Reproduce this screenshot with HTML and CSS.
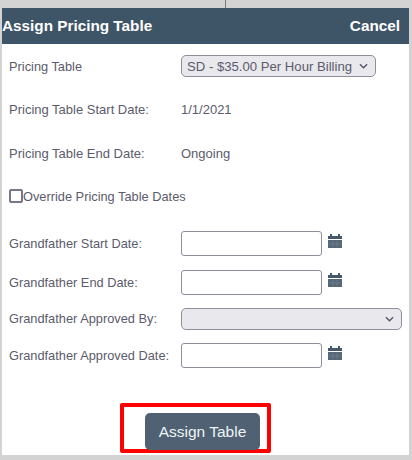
FILE: index.html
```html
<!DOCTYPE html>
<html lang="en">
<head>
<meta charset="utf-8">
<title>Assign Pricing Table</title>
<link rel="stylesheet" href="styles.css">
</head>
<body>
<div class="backdrop-line"></div>
<div class="dialog">
  <header class="head"><span>Assign Pricing Table</span><span>Cancel</span></header>
  <div class="form">
    <div class="row row-a"><span class="label">Pricing Table</span>
      <span class="select sel-short"><span class="sel-text">SD - $35.00 Per Hour Billing</span><svg class="chev" width="9" height="6" viewBox="0 0 10 6"><path d="M1 1l4 4 4-4" fill="none" stroke="#55556a" stroke-width="1.5"/></svg></span></div>
    <div class="row row-b"><span class="label">Pricing Table Start Date:</span><span class="value">1/1/2021</span></div>
    <div class="row row-b"><span class="label">Pricing Table End Date:</span><span class="value">Ongoing</span></div>
    <div class="row row-c"><span class="check"></span><span class="label">Override Pricing Table Dates</span></div>
    <div class="row row-d"><span class="label">Grandfather Start Date:</span><span class="input"></span>
      <svg class="cal" width="14" height="14" viewBox="0 0 14 14"><use href="#cal"/></svg></div>
    <div class="row row-e"><span class="label">Grandfather End Date:</span><span class="input"></span>
      <svg class="cal" width="14" height="14" viewBox="0 0 14 14"><use href="#cal"/></svg></div>
    <div class="row row-f"><span class="label">Grandfather Approved By:</span>
      <span class="select sel-wide"><span></span><svg class="chev" width="9" height="6" viewBox="0 0 10 6"><path d="M1 1l4 4 4-4" fill="none" stroke="#55556a" stroke-width="1.5"/></svg></span></div>
    <div class="row row-g"><span class="label">Grandfather Approved Date:</span><span class="input"></span>
      <svg class="cal" width="14" height="14" viewBox="0 0 14 14"><use href="#cal"/></svg></div>
  </div>
  <div class="actions"><div class="highlight"><button class="assign" type="button">Assign Table</button></div></div>
</div>
<svg width="0" height="0" class="defs"><defs><symbol id="cal" viewBox="0 0 14 14">
  <path d="M0 2h2V0h2v2h6V0h2v2h2v3H0z" fill="#46596b"/>
  <path d="M0 6h14v8H0z" fill="#566777"/>
  <path d="M5 7v6M9 7v6M1 10h12" stroke="#75838f" stroke-width=".7"/>
</symbol></defs></svg>
</body>
</html>
```
FILE: styles.css
```css
* { box-sizing: border-box; }
html, body { margin: 0; height: 460px; overflow: hidden; }
body { background: #d3d3d3; font-family: "Liberation Sans", Arial, sans-serif; position: relative; }
.backdrop-line { position: absolute; left: 225px; top: 0; width: 1px; height: 8px; background: #7a7a7a; }
.defs { position: absolute; }
.dialog { margin: 8px 3px 0 2px; height: 447px; background: #fff; display: flex; flex-direction: column; }
.head { height: 36px; background: #3e5467; color: #fff; font-size: 15.3px; font-weight: bold; display: flex; justify-content: space-between; align-items: center; padding: 0 9px 0 0; flex: none; }
.form { padding: 0 7px; }
.row { display: flex; align-items: center; font-size: 12.8px; color: #5b5b6b; white-space: nowrap; }
.label { width: 172px; flex: none; }
.value { color: #5b5b6b; }
.row-a { height: 22px; margin-top: 11px; }
.row-b { height: 22px; margin-top: 22px; font-size: 13px; }
.row-b:nth-child(2) { margin-top: 21px; }
.row-c { height: 18px; margin-top: 23px; }
.row-c .label { width: auto; }
.row-d { height: 25px; margin-top: 26px; }
.row-e { height: 25px; margin-top: 14px; }
.row-f { height: 22px; margin-top: 13px; }
.row-f .label { padding-bottom: 2px; }
.row-g { height: 25px; margin-top: 13px; }
.select { display: flex; align-items: center; justify-content: space-between; height: 22px; background: #e9e8ed; border: 1px solid #8f8e9d; border-radius: 5px; padding: 0 7px 0 5px; color: #5b5b6b; }
.sel-text { font-size: 13.15px; }
.sel-short { width: 195px; }
.sel-wide { width: 221px; }
.chev { flex: none; }
.input { width: 141px; height: 25px; border: 1px solid #8f8e9d; border-radius: 3px; background: #fff; flex: none; }
.cal { margin: 0 0 6px 6px; flex: none; }
.check { width: 14px; height: 14px; border: 2px solid #77768a; border-radius: 2px; flex: none; background: #fff; }
.actions { display: flex; padding-left: 118px; margin-top: 35px; }
.highlight { width: 151px; height: 50px; border: 4px solid #fe0000; border-radius: 2px; padding: 6px 0 0 21px; flex: none; }
.assign { display: block; width: 115px; height: 37px; margin: 0; background: #4f6172; color: #eef3f8; border: 0; border-radius: 5px; font: 15.5px "Liberation Sans", Arial, sans-serif; padding: 0; }
```
